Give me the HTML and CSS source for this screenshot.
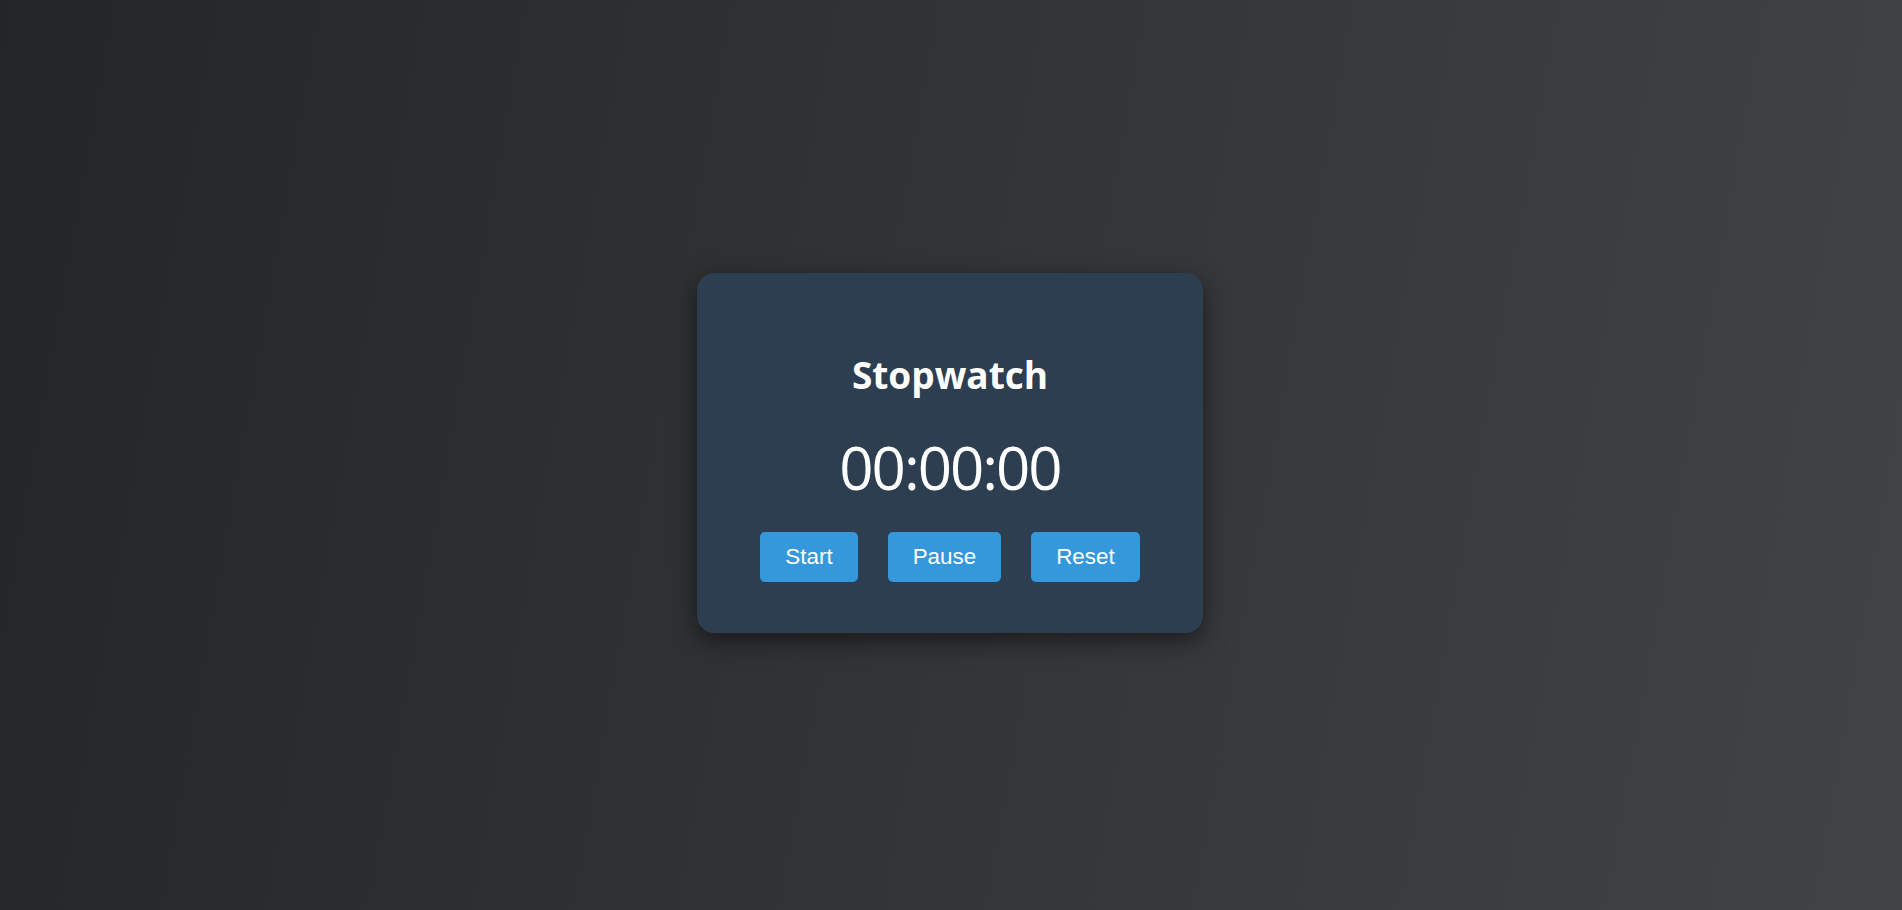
FILE: index.html
```html
<!DOCTYPE html>
<html lang="en">
<head>
<meta charset="utf-8">
<title>Stopwatch</title>
<link rel="stylesheet" href="styles.css">
</head>
<body>
  <main class="stopwatch">
    <h1 class="stopwatch-title">Stopwatch</h1>
    <div class="stopwatch-display">00:00:00</div>
    <div class="stopwatch-controls">
      <button class="btn" type="button">Start</button>
      <button class="btn" type="button">Pause</button>
      <button class="btn" type="button">Reset</button>
    </div>
  </main>
</body>
</html>
```

FILE: styles.css
```css
* {
  box-sizing: border-box;
}

html, body {
  margin: 0;
  padding: 0;
}

body {
  min-height: 100vh;
  padding-bottom: 4px;
  padding-right: 2px;
  display: flex;
  align-items: center;
  justify-content: center;
  background: linear-gradient(100deg, #232526 0%, #414345 100%);
  font-family: "Open Sans", "Noto Sans", sans-serif;
  color: #ffffff;
}

.stopwatch {
  width: 506px;
  height: 360px;
  padding: 77px 0 51px;
  background: #2c3e50;
  border-radius: 17px;
  box-shadow: 0 8px 24px rgba(0, 0, 0, 0.5);
  display: flex;
  flex-direction: column;
  align-items: center;
}

.stopwatch-title {
  margin: 0;
  font-size: 37px;
  font-weight: 700;
  line-height: 50px;
  color: #ffffff;
}

.stopwatch-display {
  margin-top: 27px;
  font-size: 60px;
  font-weight: 400;
  line-height: 80px;
  letter-spacing: -2px;
  color: #ffffff;
}

.stopwatch-controls {
  margin-top: 25px;
  display: flex;
  justify-content: center;
  gap: 30px;
}

.btn {
  border: none;
  border-radius: 5px;
  background: #3498db;
  color: #ffffff;
  font-family: "Liberation Sans", Arial, sans-serif;
  font-size: 22.4px;
  line-height: 26px;
  padding: 12px 25px;
  cursor: pointer;
}
```
